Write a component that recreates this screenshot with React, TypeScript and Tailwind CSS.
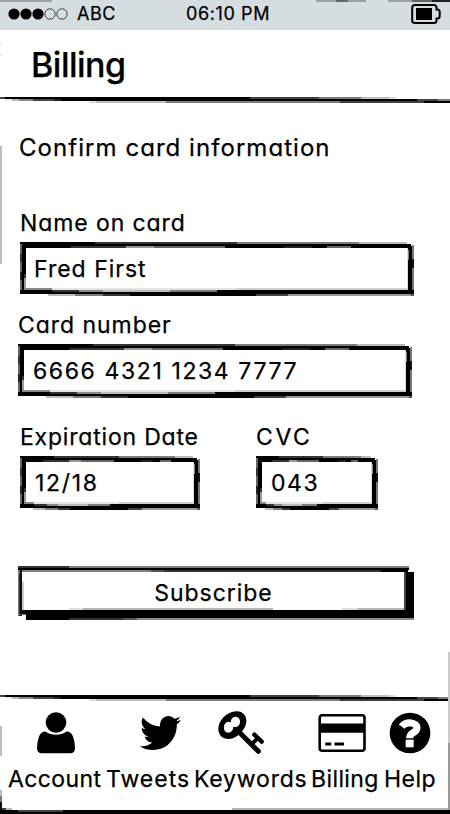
import type { ReactNode } from "react";

type Seg = [number, number, number, number, string];

function Strokes({ segs }: { segs: Seg[] }) {
  return (
    <>
      {segs.map(([x0, y0, x1, y1, fill], i) => (
        <rect key={i} x={x0} y={y0} width={x1 - x0} height={y1 - y0} fill={fill} />
      ))}
    </>
  );
}

const ruleSegs: Seg[] = [
  [0, 0, 5, 2, "#444"], [5, 0, 250, 2, "#000"], [250, 0, 319, 2, "#404040"], [319, 0, 361, 2, "#7c7c7c"],
  [361, 0, 389, 2, "#c0c0c0"], [389, 0, 396, 2, "#dedede"],
  [5, 2, 12, 4, "#eee"], [12, 2, 19, 4, "#bbb"], [19, 2, 33, 4, "#888"], [33, 2, 54, 4, "#444"],
  [54, 2, 61, 4, "#222"], [61, 2, 417, 4, "#000"], [417, 2, 438, 4, "#444"], [438, 2, 450, 4, "#7c7c7c"],
  [89, 4, 96, 6, "#ddd"], [96, 4, 166, 6, "#bfbfbf"], [166, 4, 340, 6, "#7c7c7c"], [340, 4, 424, 6, "#404040"],
  [424, 4, 450, 6, "#000"],
];

function RoughRule() {
  return (
    <svg className="block h-1.5 w-full shrink-0" viewBox="0 0 450 6" shapeRendering="crispEdges">
      <Strokes segs={ruleSegs} />
    </svg>
  );
}

/* Hand drawn rectangle, built for a given width */
function RoughBox({ w }: { w: number }) {
  const p = (f: number) => Math.round(w * f);
  const segs: Seg[] = [
    [0, 0, p(0.19), 2, "#000"], [p(0.19), 0, p(0.55), 2, "#333"], [p(0.55), 0, p(0.86), 2, "#7c7c7c"],
    [p(0.86), 0, w - 7, 2, "#bbb"],
    [0, 2, w - 3, 4, "#000"],
    [4, 4, w - 2, 6, "#000"], [p(0.13), 4, p(0.27), 6, "#333"], [p(0.27), 4, p(0.34), 6, "#999"],
    [p(0.34), 4, p(0.52), 6, "#666"], [p(0.67), 4, p(0.74), 6, "#222"], [p(0.78), 4, p(0.84), 6, "#666"],
    [0, 2, 2, 50, "#666"], [0, 12, 2, 20, "#333"], [0, 30, 2, 38, "#222"],
    [2, 4, 6, 50, "#000"], [4, 36, 6, 48, "#999"], [4, 32, 6, 36, "#333"],
    [w - 7, 6, w - 6, 47, "#ddd"], [w - 6, 5, w - 2, 52, "#000"], [w - 6, 8, w - 5, 18, "#888"],
    [w - 2, 3, w, 52, "#777"], [w - 2, 17, w, 26, "#111"],
    [4, 46, p(0.08), 48, "#888"], [p(0.08), 46, p(0.55), 48, "#e4e4e4"], [p(0.55), 46, w - 6, 48, "#cfcfcf"],
    [0, 48, w, 52, "#000"], [p(0.08), 48, p(0.15), 50, "#333"], [p(0.15), 48, p(0.21), 50, "#888"],
    [p(0.21), 48, p(0.38), 50, "#bbb"], [p(0.38), 48, p(0.5), 50, "#7c7c7c"],
    [p(0.07), 52, p(0.14), 54, "#bbb"], [p(0.14), 52, p(0.21), 54, "#7c7c7c"], [p(0.21), 52, p(0.28), 54, "#333"],
    [p(0.28), 52, p(0.6), 54, "#000"], [p(0.6), 52, p(0.68), 54, "#444"], [p(0.68), 52, w - 3, 54, "#999"],
    [w - 3, 52, w, 54, "#555"],
  ];
  return (
    <svg className="absolute inset-0 h-full w-full" viewBox={`0 0 ${w} 54`} shapeRendering="crispEdges">
      <Strokes segs={segs} />
    </svg>
  );
}

function Label({ className, children }: { className: string; children: ReactNode }) {
  return <div className={"whitespace-nowrap leading-7 " + className}>{children}</div>;
}

function Field({ className, width, textClass, children }: { className: string; width: number; textClass: string; children: ReactNode }) {
  return (
    <div className={"relative h-[54px] " + className}>
      <RoughBox w={width} />
      <div className={"relative whitespace-nowrap pt-[13px] leading-7 " + textClass}>{children}</div>
    </div>
  );
}

const buttonSegs: Seg[] = [
  [0, 0, 51, 2, "#333"], [51, 0, 391, 2, "#808080"],
  [0, 2, 391, 4, "#000"],
  [4, 4, 133, 6, "#808080"], [133, 4, 146, 6, "#555"], [146, 4, 363, 6, "#333"], [363, 4, 390, 6, "#000"],
  [0, 4, 2, 50, "#777"], [1, 8, 2, 50, "#333"], [2, 4, 4, 50, "#111"], [4, 16, 6, 44, "#ccc"],
  [51, 42, 65, 44, "#ddd"], [65, 42, 255, 44, "#b5b5b5"], [324, 42, 340, 44, "#ddd"], [340, 42, 386, 44, "#b5b5b5"],
  [0, 48, 8, 49, "#666"], [2, 44, 8, 48, "#111"],
  [386, 6, 388, 44, "#444"], [388, 6, 396, 52, "#000"],
  [8, 44, 396, 52, "#000"],
  [8, 52, 51, 54, "#000"], [51, 52, 105, 54, "#333"], [105, 52, 119, 54, "#555"], [119, 52, 396, 54, "#8a8a8a"],
];

function SubscribeButton() {
  return (
    <button className="relative ml-[18px] mt-14 block h-[54px] w-[396px]">
      <svg className="absolute inset-0 h-full w-full" viewBox="0 0 396 54" shapeRendering="crispEdges">
        <Strokes segs={buttonSegs} />
      </svg>
      <span className="relative block pr-[5px] text-center leading-7 tracking-[0.95px]">Subscribe</span>
    </button>
  );
}

function Signal() {
  return (
    <svg className="ml-2 h-3 w-[62px]" viewBox="0 0 62 12">
      <circle cx="6" cy="6" r="5.6" />
      <circle cx="18" cy="6" r="5.6" />
      <circle cx="30" cy="6" r="5.6" />
      <circle cx="42" cy="6" r="5.2" fill="none" stroke="#333" strokeWidth=".9" />
      <circle cx="54" cy="6" r="5.2" fill="none" stroke="#333" strokeWidth=".9" />
    </svg>
  );
}

function Battery() {
  return (
    <svg className="h-5 w-[30px]" viewBox="0 0 30 20">
      <path d="M4 1H23Q25.500 1 25.500 3.500V5.500H26.500Q28.700 5.500 28.700 8V12Q28.700 14.500 26.500 14.500H25.500V16.500Q25.500 19 23 19H4Q1.200 19 1.200 16.500V3.500Q1.200 1 4 1z" fill="none" stroke="#000" strokeWidth="2" />
      <path d="M5 4H21V16H5z" />
    </svg>
  );
}

function UserIcon() {
  return (
    <svg className="h-[42px] w-[38px]" viewBox="0 0 38 42">
      <circle cx="19" cy="10.500" r="10.300" />
      <path d="M8.500 19.500Q13 22.700 19 22.700Q25 22.700 29.500 19.500Q34 19.500 36 24.500Q38 30 38 36Q38 41.300 33 41.300H5Q0 41.300 0 36Q0 30 2 24.500Q4 19.500 8.500 19.500z" />
    </svg>
  );
}

function TwitterIcon() {
  return (
    <svg className="h-[34px] w-[41px]" viewBox="108 256 1576 1280" preserveAspectRatio="none">
      <path d="M1684 408q-67 98-162 167 1 14 1 42 0 130-38 259.500t-115.500 248.500-184.500 210.500-258 146-323 54.500q-271 0-496-145 35 4 78 4 225 0 401-138-105-2-188-64.500t-114-159.500q33 5 61 5 43 0 85-11-112-23-185.500-111.500t-73.500-205.500v-4q68 38 146 41-66-44-105-115t-39-154q0-88 44-163 121 149 294.500 238.500t371.500 99.500q-8-38-8-74 0-134 94.500-228.500t228.500-94.500q140 0 236 102 109-21 205-78-37 115-142 178 93-10 186-50z" />
    </svg>
  );
}

function KeyIcon() {
  return (
    <svg className="h-[44px] w-[46px]" viewBox="37 32 138 132" fill="none" stroke="#000">
      <path fill="#000" stroke="none" fillRule="evenodd" d="M92 33C111 32 123 45 122 64C121 76 115 86 107 96C97 108 83 116 69 116C50 116 38 104 38 86C38 60 63 35 92 33zM89 49A14 14 0 0 0 76 66A15 15 0 0 0 55 83A14 14 0 0 0 68 97A15 15 0 0 0 82 79A15 15 0 0 0 103 64A14 14 0 0 0 89 49z" />
      <path d="M98 93L158 153" strokeWidth="15" strokeLinecap="round" />
      <path d="M146 103L168 124" strokeWidth="13" strokeLinecap="round" />
      <path d="M156 114L137 132" strokeWidth="12" />
    </svg>
  );
}

function CardIcon() {
  return (
    <svg className="h-[38px] w-12" viewBox="0 0 48 38">
      <rect x="1.700" y="1.300" width="44.800" height="35.400" rx="2.500" fill="none" stroke="#000" strokeWidth="2.600" />
      <path d="M1 9.500H47V18.700H1zM7.300 28.500H13.300V31.500H7.300zM16.500 28.500H26V31.500H16.500z" />
    </svg>
  );
}

function HelpIcon() {
  return (
    <svg className="h-[42px] w-[42px]" viewBox="-1 -1 126 126">
      <circle cx="62" cy="62" r="61" />
      <path d="M37 43Q46 31 61 31Q83 33 83 47Q82 56 70 62Q61 67 61 78" fill="none" stroke="#fff" strokeWidth="21" />
      <path d="M49 82H73V105H49z" fill="#fff" />
    </svg>
  );
}

function Tab({ className, textClass, icon, children }: { className: string; textClass: string; icon: ReactNode; children: ReactNode }) {
  return (
    <a className={"flex shrink-0 flex-col " + className}>
      <span className="flex h-[43px] items-center">{icon}</span>
      <span className={"mt-[11px] whitespace-nowrap leading-7 " + textClass}>{children}</span>
    </a>
  );
}

const frameSegs: Seg[] = [
  [0, 0, 52, 2, "#9a9fa1"], [316, 0, 366, 2, "#9a9fa1"], [336, 0, 348, 2, "#666"], [388, 0, 412, 2, "#9a9fa1"],
  [412, 0, 432, 2, "#666"], [432, 0, 450, 2, "#222"],
  [0, 42, 2, 44, "#eee"], [0, 54, 2, 56, "#eee"], [0, 146, 2, 264, "#bdbdbd"], [0, 726, 2, 756, "#bdbdbd"],
  [0, 790, 2, 796, "#bbb"], [0, 796, 2, 802, "#777"], [0, 802, 2, 814, "#111"],
  [448, 652, 450, 743, "#ccc"], [448, 743, 450, 810, "#999"],
  [2, 808, 6, 810, "#444"], [6, 808, 12, 810, "#bbb"], [232, 808, 448, 810, "#b5b5b5"],
  [0, 810, 450, 814, "#000"], [18, 810, 63, 812, "#444"],
];

export default function App() {
  return (
    <div className="relative flex h-[814px] w-[450px] flex-col overflow-hidden bg-white font-['Inter',sans-serif] text-[23px] text-black [-webkit-text-stroke:0.25px_black] [font-feature-settings:'cv11']">
      <header className="flex h-[30px] shrink-0 items-center bg-[#d6dde1] pb-0.5 text-[18px] leading-6">
        <Signal />
        <span className="ml-[7px] w-[109px] tracking-[0.5px]">ABC</span>
        <span className="w-[225px] whitespace-nowrap tracking-[0.6px]">06:10 PM</span>
        <Battery />
      </header>
      <h1 className="h-[67px] shrink-0 pl-[31px] pt-[17px] text-[34px] font-medium leading-9 tracking-[-0.5px]">Billing</h1>
      <RoughRule />
      <main className="h-[592px] shrink-0 overflow-hidden">
        <Label className="ml-[19px] mt-[31px] text-[24px] tracking-[1.05px]">Confirm card information</Label>
        <Label className="ml-5 mt-[47px] tracking-[0.9px]">Name on card</Label>
        <Field className="ml-5 mt-[5px] w-[394px]" width={394} textClass="pl-3.5 tracking-[1px]">Fred First</Field>
        <Label className="ml-[18px] mt-[15px] tracking-[0.95px]">Card number</Label>
        <Field className="ml-[18px] mt-[5px] w-[394px]" width={394} textClass="pl-[15px] tracking-[1.6px]">6666 4321 1234 7777</Field>
        <div className="ml-5 mt-[25px] flex">
          <div className="w-[236px]">
            <Label className="tracking-[0.8px]">Expiration Date</Label>
            <Field className="mt-[5px] w-[180px]" width={180} textClass="pl-[15px] tracking-[1.7px]">12/18</Field>
          </div>
          <div>
            <Label className="tracking-[2.6px]">CVC</Label>
            <Field className="mt-[5px] w-[122px]" width={122} textClass="pl-[15px] tracking-[1.6px]">043</Field>
          </div>
        </div>
        <SubscribeButton />
      </main>
      <RoughRule />
      <nav className="flex h-[113px] shrink-0 pt-[10px]">
        <Tab className="ml-2 w-[98px] [&_svg]:ml-[29px]" textClass="tracking-[0.4px]" icon={<UserIcon />}>Account</Tab>
        <Tab className="w-[88px] [&_svg]:ml-[34px]" textClass="tracking-[1px]" icon={<TwitterIcon />}>Tweets</Tab>
        <Tab className="w-[118px] [&_svg]:ml-[24px]" textClass="tracking-[0.8px]" icon={<KeyIcon />}>Keywords</Tab>
        <Tab className="w-[73px] [&_svg]:ml-[6px]" textClass="-ml-px tracking-[0.4px]" icon={<CardIcon />}>Billing</Tab>
        <Tab className="w-[60px] [&_svg]:ml-[4px]" textClass="-ml-px tracking-[0.5px]" icon={<HelpIcon />}>Help</Tab>
      </nav>
      <svg className="pointer-events-none absolute inset-0 h-full w-full" viewBox="0 0 450 814" shapeRendering="crispEdges">
        <Strokes segs={frameSegs} />
      </svg>
    </div>
  );
}
